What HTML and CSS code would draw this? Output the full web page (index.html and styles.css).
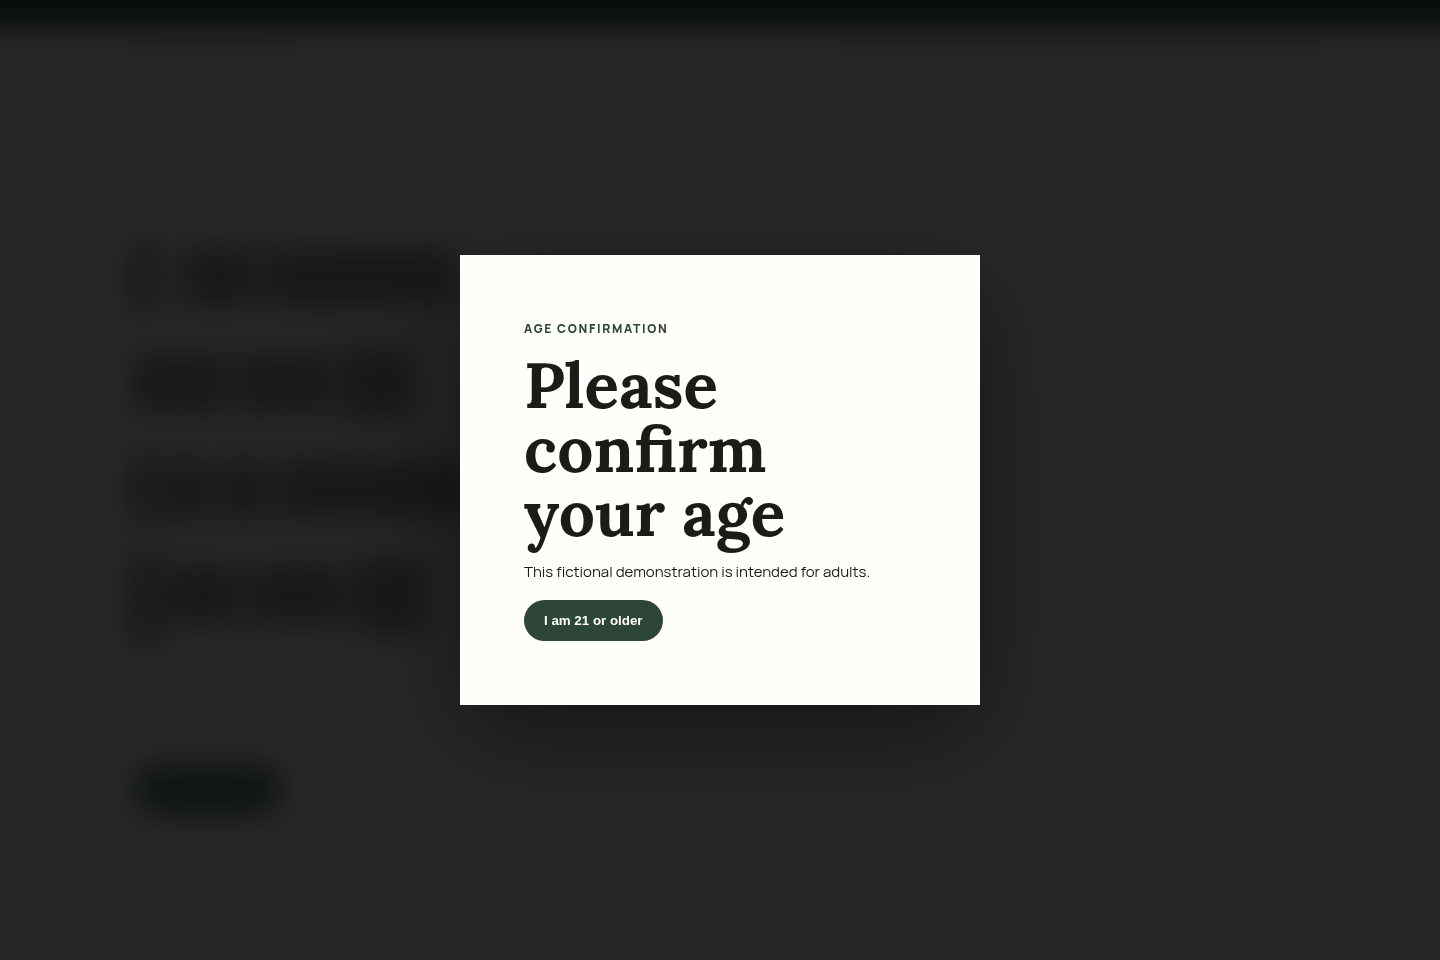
FILE: index.html
```html
<!DOCTYPE html>
<html lang="en">
<head>
<meta charset="utf-8">
<meta name="viewport" content="width=device-width, initial-scale=1">
<title>Age confirmation</title>
<link rel="stylesheet" href="styles.css">
</head>
<body>
<div class="page" aria-hidden="true">
  <div class="banner"></div>
  <div class="topbar">
    <span class="brand"></span>
    <span class="nav"></span>
  </div>
  <div class="hero">
    <div class="row"><i class="stem cap"></i><i class="word w-s"></i><i class="word w-l"></i></div>
    <div class="row"><i class="word w-m"></i><i class="word w-m"></i><i class="word tall w-s"></i></div>
    <div class="row"><i class="stem"></i><i class="word w-xs"></i><i class="word w-xs"></i><i class="word w-l"></i></div>
    <div class="row"><i class="stem low"></i><i class="word w-s"></i><i class="word w-m"></i><i class="word tall w-s"></i></div>
    <div class="cta"></div>
  </div>
</div>
<div class="overlay">
  <section class="dialog" role="dialog" aria-modal="true" aria-labelledby="age-title" aria-describedby="age-text">
    <p class="eyebrow">AGE CONFIRMATION</p>
    <h1 class="title" id="age-title">Please confirm your age</h1>
    <p class="text" id="age-text">This fictional demonstration is intended for adults.</p>
    <button class="confirm" type="button">I am 21 or older</button>
  </section>
</div>
</body>
</html>
```

FILE: styles.css
```css
* { box-sizing: border-box; }

body {
  margin: 0;
  height: 100vh;
  overflow: hidden;
  background: #fffefa;
  color: #1c1b18;
  font-family: Manrope, Inter, sans-serif;
}

/* The banner bleeds past the window so its blurred edges stay solid. */
.page {
  margin: -64px -64px 0;
  filter: blur(16px);
}

.banner {
  height: 92px;
  background: #2d4639;
}

.topbar {
  display: flex;
  align-items: center;
  justify-content: space-between;
  height: 72px;
  padding: 0 184px 0 200px;
}

.brand {
  width: 152px;
  height: 12px;
  background: #d2d1ce;
}

.nav {
  width: 480px;
  height: 8px;
  background: #dddcd8;
}

.hero {
  padding: 124px 196px 0;
}

.row {
  display: flex;
  align-items: center;
  gap: 8px;
  height: 106px;
}

.stem {
  width: 24px;
  height: 72px;
  background: #86857e;
}

.cap { margin-right: 16px; }

.low {
  height: 96px;
  align-self: flex-end;
}

.word {
  height: 60px;
  background: #98978f;
}

.tall { height: 76px; }

.w-xs { width: 48px; }
.w-s { width: 76px; }
.w-m { width: 96px; }
.w-l { width: 192px; }

.cta {
  width: 152px;
  height: 52px;
  margin-top: 116px;
  border-radius: 26px;
  background: #61766b;
}

.overlay {
  position: fixed;
  inset: 0;
  display: grid;
  place-items: center;
  padding: 24px;
  background: rgba(0, 2, 2, 0.85);
}

.dialog {
  width: 100%;
  max-width: 520px;
  padding: 64px;
  background: #fffefa;
  box-shadow: 0 30px 100px rgba(0, 0, 0, 0.5);
}

.eyebrow {
  margin: 0 0 14px;
  color: #2d4639;
  font-size: 12px;
  font-weight: 800;
  line-height: 20px;
  letter-spacing: 0.14em;
}

.title {
  max-width: 320px;
  margin: 0 0 14px;
  font-family: Lora, "Liberation Serif", serif;
  font-size: 64px;
  font-weight: 700;
  line-height: 1;
}

.text {
  margin: 0 0 16px;
  font-size: 15px;
  font-weight: 400;
  line-height: 25px;
}

.confirm {
  padding: 13px 20px;
  border: 0;
  border-radius: 24px;
  background: #2d4639;
  color: #fffefa;
  font-family: "Liberation Sans", Arial, sans-serif;
  font-weight: 700;
  line-height: 15px;
}
```
